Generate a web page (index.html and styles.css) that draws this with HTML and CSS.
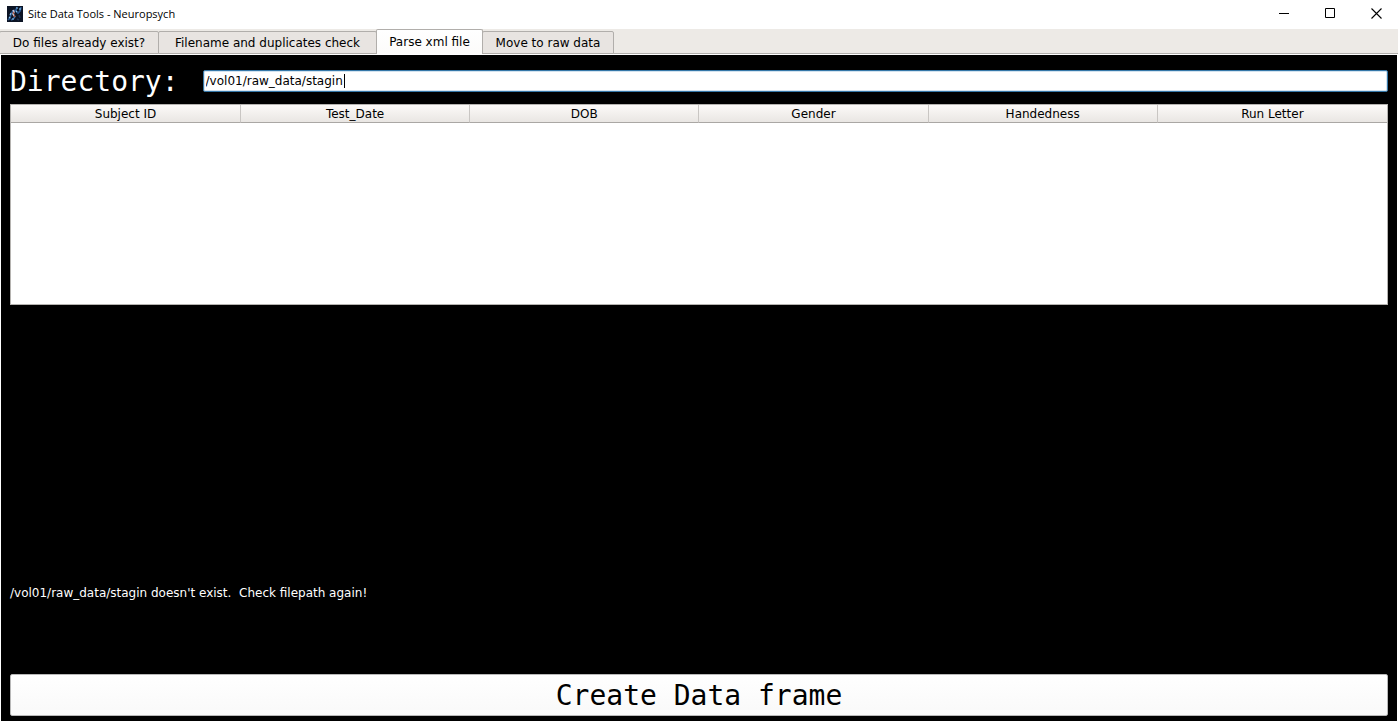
FILE: index.html
```html
<!DOCTYPE html>
<html lang="en">
<head>
<meta charset="utf-8">
<title>Site Data Tools - Neuropsych</title>
<link rel="stylesheet" href="styles.css">
</head>
<body>
<header class="titlebar">
  <svg class="app-icon" viewBox="0 0 16 16" aria-hidden="true">
    <rect width="16" height="16" fill="#0c1424"/>
    <path d="M1 14l2-2 1-4 2-3 3-1 1-3M4 14l2-1 2-2M9 5l2 2 2-2 1-4" fill="none" stroke="#28568f" stroke-width="1.7"/>
    <path d="M12 9l1 3M10 13l2 1" stroke="#1b3152" stroke-width="1.6"/>
    <path d="M9.500 1.500l1 1M13 2v2M4 7l-1 2M5 13h2M9 5l1 1M2 12l1-1" stroke="#83bfea" stroke-width="1.2"/>
    <path d="M6 4l1 2-1 2 2 3" fill="none" stroke="#c9c6d8" stroke-width="1.6"/>
    <path d="M6 6l1 2M7.500 9v2" stroke="#b0563f" stroke-width="1.1"/>
  </svg>
  <h1 class="title">Site Data Tools - Neuropsych</h1>
  <div class="window-controls">
    <button type="button" class="window-button" aria-label="Minimize"><svg viewBox="0 0 11 11"><path d="M0 5.5h10" stroke="#000" fill="none"/></svg></button>
    <button type="button" class="window-button" aria-label="Maximize"><svg viewBox="0 0 11 11"><path d="M.5 .5h9v9h-9z" stroke="#000" fill="none"/></svg></button>
    <button type="button" class="window-button" aria-label="Close"><svg viewBox="0 0 11 11"><path d="M.5 .5l10 10M10.500 .5l-10 10" stroke="#000" stroke-width="1.1" fill="none"/></svg></button>
  </div>
</header>
<nav class="tabs" role="tablist">
  <button type="button" class="tab tab-exist" role="tab">Do files already exist?</button>
  <button type="button" class="tab tab-check" role="tab">Filename and duplicates check</button>
  <button type="button" class="tab tab-parse tab-active" role="tab" aria-selected="true">Parse xml file</button>
  <button type="button" class="tab tab-move" role="tab">Move to raw data</button>
</nav>
<main class="page">
  <div class="directory">
    <label class="directory-label" for="directory">Directory:</label>
    <div class="directory-field">
      <input class="directory-input" id="directory" type="text" value="/vol01/raw_data/stagin">
      <span class="caret"></span>
    </div>
  </div>
  <div class="table-view">
    <table class="table">
      <thead>
        <tr><th>Subject ID</th><th>Test_Date</th><th>DOB</th><th>Gender</th><th>Handedness</th><th>Run Letter</th></tr>
      </thead>
    </table>
  </div>
  <p class="message">/vol01/raw_data/stagin doesn't exist.&nbsp; Check filepath again!</p>
  <button type="button" class="create">Create Data frame</button>
</main>
</body>
</html>
```
FILE: styles.css
```css
* {
  box-sizing: border-box;
}

body {
  margin: 0;
  min-height: 100vh;
  display: flex;
  flex-direction: column;
  background: #fff;
  color: #000;
  font: 12px/16px "DejaVu Sans", sans-serif;
}

button,
input {
  font: inherit;
  color: inherit;
}

.titlebar {
  display: flex;
  align-items: center;
  height: 29px;
  padding-left: 7px;
  padding-bottom: 2px;
}

.app-icon {
  width: 16px;
  height: 16px;
}

.title {
  margin: 0 0 0 5px;
  font: 11px/16px "Open Sans", sans-serif;
}

.window-controls {
  display: flex;
  margin-left: auto;
}

.window-button {
  display: flex;
  align-items: center;
  justify-content: center;
  width: 46px;
  height: 27px;
  padding: 0 0 0 2px;
  border: 0;
  background: none;
}

.window-button svg {
  width: 11px;
  height: 11px;
}

.tabs {
  display: flex;
  align-items: flex-end;
  height: 25px;
  background: #edeae6;
  box-shadow: inset 0 -1px #b1afac;
}

.tab {
  height: 23px;
  margin-left: -1px;
  padding: 0 11px;
  border: 1px solid #b1aeab;
  border-radius: 2px 2px 0 0;
  background: #e8e4e1;
}

.tab-exist {
  min-width: 160px;
}

.tab-check {
  min-width: 219px;
}

.tab-parse {
  min-width: 107px;
}

.tab-move {
  min-width: 132px;
}

.tab-active {
  height: 25px;
  border-bottom: 0;
  background: linear-gradient(#fff, #fcfbfa);
  z-index: 1;
}

.page {
  flex: 1;
  display: flex;
  flex-direction: column;
  margin: 0 1px;
  padding: 10px 9px 5px;
  border-top: 1px solid #fff;
  background: #000;
}

.directory {
  display: flex;
  align-items: center;
  gap: 24px;
  height: 32px;
}

.directory-label {
  padding-top: 2px;
  color: #fff;
  font: 28px/32px "DejaVu Sans Mono", monospace;
}

.directory-field {
  position: relative;
  flex: 1;
  display: flex;
}

.directory-input {
  width: 100%;
  height: 22px;
  padding: 0 2px;
  border: 1px solid #3577a8;
  border-radius: 2px;
  outline: 0;
  background: #fff;
  box-shadow: inset 0 0 0 1px #d3e3ef;
}

.caret {
  position: absolute;
  left: 141px;
  top: 4px;
  width: 1px;
  height: 14px;
  background: #000;
}

.table-view {
  height: 201px;
  margin-top: 7px;
  border: 1px solid #b5b3b0;
  background: #fff;
}

.table {
  width: 100%;
  table-layout: fixed;
  border-collapse: separate;
  border-spacing: 0;
}

.table th {
  height: 18px;
  padding: 0;
  border-right: 1px solid #c9c6c3;
  border-bottom: 1px solid #aaa7a4;
  background: linear-gradient(#fcfaf8, #e9e6e3);
  font-weight: normal;
  line-height: 16px;
}

.table th:first-child {
  width: 230px;
}

.table th:last-child {
  border-right: 0;
}

.message {
  margin: auto 0 73px;
  color: #fff;
}

.create {
  height: 42px;
  padding: 2px 0 0;
  border: 1px solid #b8b8b8;
  border-radius: 2px;
  background: linear-gradient(#fff, #f9f9f9);
  font: 28px/38px "DejaVu Sans Mono", monospace;
}
```
